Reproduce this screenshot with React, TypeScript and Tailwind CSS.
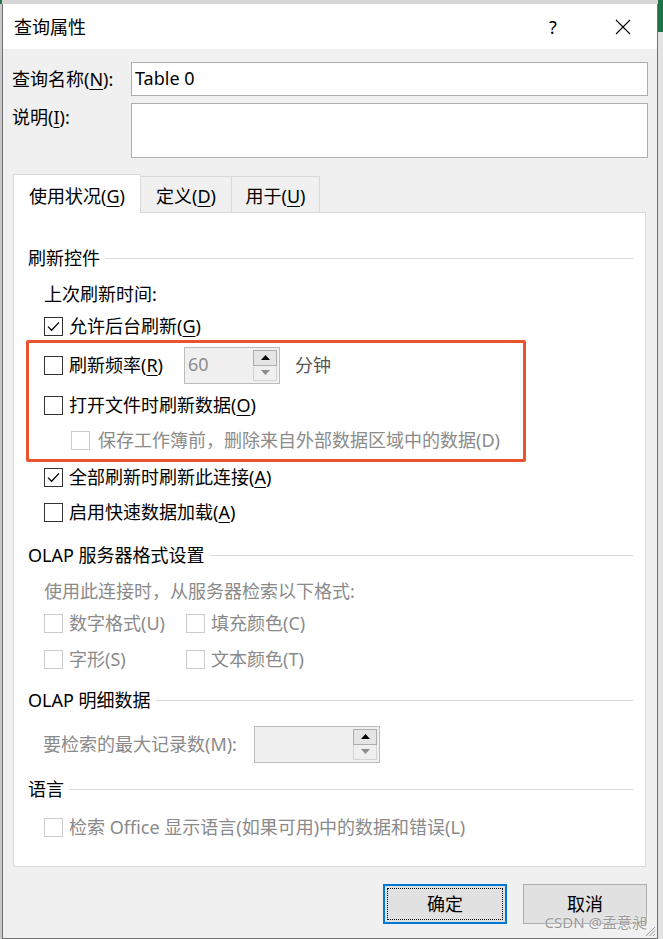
import type { ReactNode } from "react";

const FONT = "font-['Noto_Sans','Noto_Sans_CJK_SC',sans-serif]";

function Check({ checked = false, disabled = false }: { checked?: boolean; disabled?: boolean }) {
  return (
    <span
      className={`flex h-[19px] w-[19px] shrink-0 items-center justify-center border bg-white ${
        disabled ? "border-[#cccccc]" : "border-[#333333]"
      }`}
    >
      {checked && (
        <svg width="15" height="15" viewBox="0 0 15 15">
          <path d="M2 7.6 L5.6 11.2 L13 3.4" fill="none" stroke="#000" strokeWidth="1.3" />
        </svg>
      )}
    </span>
  );
}

function Opt({
  checked,
  disabled,
  children,
}: {
  checked?: boolean;
  disabled?: boolean;
  children: ReactNode;
}) {
  return (
    <div className="flex items-center gap-[6px]">
      <Check checked={checked} disabled={disabled} />
      <span className={disabled ? "text-[#8a8a8a]" : "text-black"}>{children}</span>
    </div>
  );
}

function Group({ title }: { title: string }) {
  return (
    <div className="flex h-full items-center">
      <span>{title}</span>
      <span className="ml-[5px] h-px flex-1 bg-[#dadada]" />
    </div>
  );
}

function Spin({ value, width }: { value: string; width: string }) {
  return (
    <div className={`flex h-[37px] border border-[#bcbcbc] bg-[#f0f0f0] ${width}`}>
      <div className="flex flex-1 items-center pb-[3px] pl-[3px] text-[#8d8d8d]">{value}</div>
      <div className="flex w-[26px] flex-col py-[2px] pr-[2px]">
        <div className="flex h-[16px] items-center justify-center border border-[#adadad] bg-[#e5e5e5]">
          <svg width="9" height="5" viewBox="0 0 9 5">
            <path d="M0 5 L4.5 0 L9 5Z" fill="#000" />
          </svg>
        </div>
        <div className="flex flex-1 items-center justify-center border border-t-0 border-[#d4d4d4] bg-[#efefef]">
          <svg width="9" height="5" viewBox="0 0 9 5">
            <path d="M0 0 L9 0 L4.5 5Z" fill="#8c8c8c" />
          </svg>
        </div>
      </div>
    </div>
  );
}

const U = ({ c }: { c: string }) => <u className="underline decoration-1 underline-offset-[3px]">{c}</u>;

export default function App() {
  return (
    <div className={`flex h-[939px] w-[663px] overflow-hidden bg-[#d6d6d6] text-[18px] leading-[24px] text-black ${FONT}`}>
      <div className="flex w-[2px] flex-col">
        <div className="h-[4px] bg-[#217346]" />
        <div className="flex-1 bg-[#c9c9c9]" />
      </div>

      <div className="relative mt-[4px] flex w-[656px] flex-col border-x border-b border-[#707070] bg-[#f0f0f0]">
        {/* title bar */}
        <div className="flex h-[45px] shrink-0 items-center bg-white pl-[11px]">
          <span>查询属性</span>
          <span className="flex-1" />
          <span className="w-[70px] text-center">?</span>
          <span className="flex w-[69px] justify-center">
            <svg width="16" height="16" viewBox="0 0 16 16">
              <path d="M1 1 L15 15 M15 1 L1 15" stroke="#000" strokeWidth="1.1" />
            </svg>
          </span>
        </div>

        <div className="flex flex-1 flex-col px-[9px]">
          <div className="mt-[13px] flex items-center">
            <span className="w-[119px]">
              查询名称(<U c="N" />):
            </span>
            <div className="flex h-[34px] flex-1 items-center border border-[#adadad] bg-white pb-[2px] pl-[3px]">
              Table 0
            </div>
          </div>
          <div className="mt-[7px] flex items-start">
            <span className="w-[119px] pt-[2px]">
              说明(<U c="I" />):
            </span>
            <div className="h-[55px] flex-1 border border-[#adadad] bg-white" />
          </div>

          {/* tabs */}
          <div className="relative z-10 ml-[1px] mt-[16px] flex items-end">
            <div className="-mb-px flex h-[39px] w-[128px] items-center justify-center border border-b-0 border-[#d9d9d9] bg-white pt-[4px]">
              使用状况(<U c="G" />)
            </div>
            <div className="flex h-[36px] w-[91px] items-center justify-center border-r border-t border-[#d9d9d9] bg-[#f0f0f0] pt-[3px]">
              定义(<U c="D" />)
            </div>
            <div className="flex h-[36px] w-[88px] items-center justify-center border-r border-t border-[#d9d9d9] bg-[#f0f0f0] pt-[3px]">
              用于(<U c="U" />)
            </div>
          </div>

          <div className="relative ml-[1px] mr-[2px] flex h-[655px] flex-col border border-[#d9d9d9] bg-white pl-[14px] pr-[12px] pt-[27px]">
            <div className="h-[36px]">
              <Group title="刷新控件" />
            </div>
            <div className="flex h-[36px] items-center pl-[16px]">上次刷新时间:</div>
            <div className="flex h-[28px] items-center pl-[16px]">
              <Opt checked>
                允许后台刷新(<U c="G" />)
              </Opt>
            </div>
            <div className="flex h-[50px] items-center pl-[16px]">
              <Check />
              <span className="ml-[6px] w-[115px]">
                刷新频率(<U c="R" />)
              </span>
              <Spin value="60" width="w-[96px]" />
              <span className="ml-[15px] text-[#555555]">分钟</span>
            </div>
            <div className="flex h-[30px] items-center pl-[16px]">
              <Opt>
                打开文件时刷新数据(<U c="O" />)
              </Opt>
            </div>
            <div className="flex h-[40px] items-center pl-[43px]">
              <Check disabled />
              <span className="ml-[8px] text-[#8a8a8a]">保存工作簿前，删除来自外部数据区域中的数据(D)</span>
            </div>
            <div className="flex h-[34px] items-center pl-[16px]">
              <Opt checked>
                全部刷新时刷新此连接(<U c="A" />)
              </Opt>
            </div>
            <div className="flex h-[36px] items-center pl-[16px]">
              <Opt>
                启用快速数据加载(<U c="A" />)
              </Opt>
            </div>

            <div className="h-[50px]">
              <Group title="OLAP 服务器格式设置" />
            </div>
            <div className="flex h-[22px] items-center pl-[16px] text-[#8a8a8a]">使用此连接时，从服务器检索以下格式:</div>
            <div className="flex h-[42px] items-center pl-[16px]">
              <div className="w-[142px]">
                <Opt disabled>数字格式(U)</Opt>
              </div>
              <Opt disabled>填充颜色(C)</Opt>
            </div>
            <div className="flex h-[30px] items-center pl-[16px]">
              <div className="w-[142px]">
                <Opt disabled>字形(S)</Opt>
              </div>
              <Opt disabled>文本颜色(T)</Opt>
            </div>

            <div className="h-[52px]">
              <Group title="OLAP 明细数据" />
            </div>
            <div className="flex h-[36px] items-center pl-[15px]">
              <span className="w-[211px] text-[#8a8a8a]">要检索的最大记录数(M):</span>
              <Spin value="" width="w-[126px]" />
            </div>

            <div className="h-[54px]">
              <Group title="语言" />
            </div>
            <div className="flex h-[22px] items-center pl-[16px]">
              <Opt disabled>检索 Office 显示语言(如果可用)中的数据和错误(L)</Opt>
            </div>

            {/* annotation */}
            <div className="pointer-events-none absolute left-[12px] top-[127px] h-[122px] w-[500px] rounded-[2px] border-[3px] border-[#e9532d]" />
          </div>

          <div className="mt-[17px] flex justify-end gap-[16px] pr-[1px]">
            <div className="flex h-[40px] w-[124px] border-2 border-[#0078d7] bg-[#e1e1e1] p-[2px]">
              <div className="flex flex-1 items-center justify-center border border-dotted border-black">确定</div>
            </div>
            <div className="flex h-[40px] w-[124px] items-center justify-center border border-[#adadad] bg-[#e1e1e1]">
              取消
            </div>
          </div>
        </div>

        <span className="absolute bottom-[4px] right-[10px] text-[15px] text-[#9a9a9a] [text-shadow:0_0_2px_#fff]">
          CSDN @孟意昶
        </span>
        <svg className="absolute bottom-[1px] right-[1px]" width="11" height="11" viewBox="0 0 11 11">
          <path d="M10 1 L1 10 M10 4.5 L4.5 10 M10 8 L8 10" stroke="#9a9a9a" strokeWidth="1" />
        </svg>
      </div>

      <div className="flex flex-1 flex-col">
        <div className="h-[32px] bg-[#217346]" />
        <div className="flex-1 bg-[#e3e3e3]" />
      </div>
    </div>
  );
}
